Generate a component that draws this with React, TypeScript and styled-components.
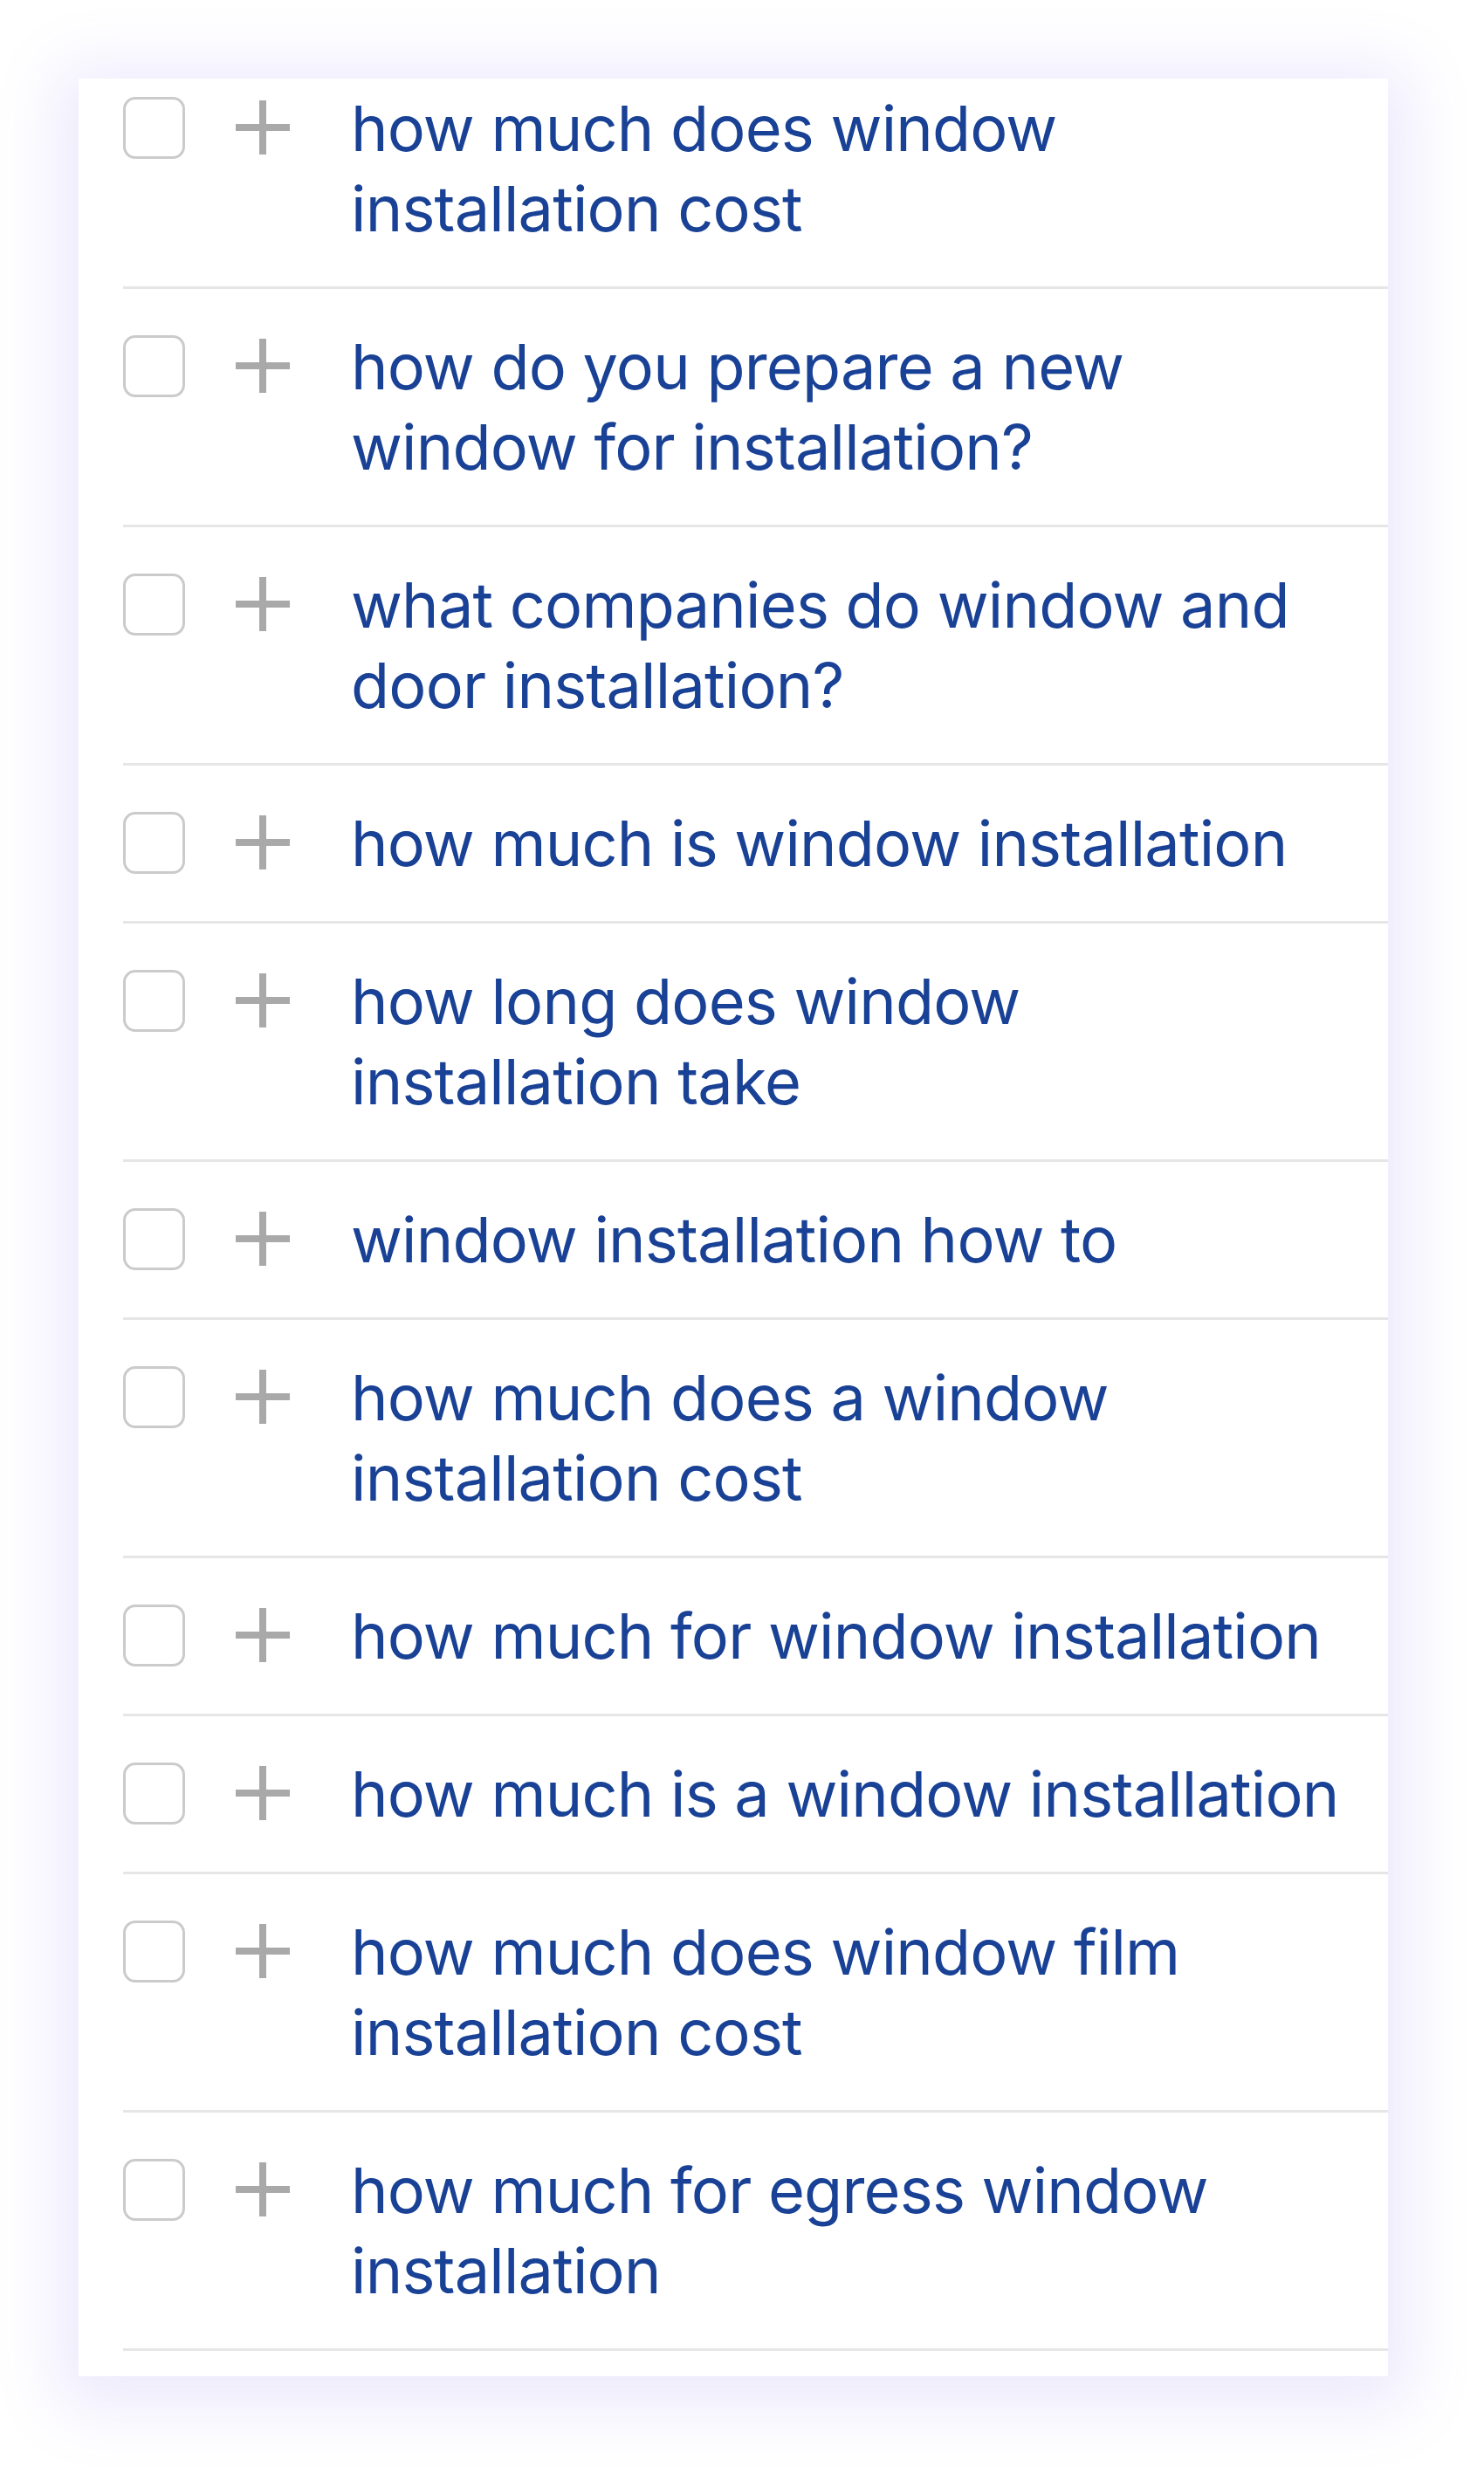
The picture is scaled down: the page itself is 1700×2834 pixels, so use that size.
import React from "react";
import styled, { createGlobalStyle } from "styled-components";

const GlobalStyle = createGlobalStyle`
    html, body {
        margin: 0;
        padding: 0;
        background: #ffffff;
    }
`;

const Page = styled.div`
    width: 1700px;
    height: 2834px;
    padding: 90px 110px 112px 90px;
    box-sizing: border-box;
`;

const Card = styled.div`
    width: 1500px;
    height: 2632px;
    background: #ffffff;
    overflow: hidden;
    padding-left: 51px;
    box-sizing: border-box;
    box-shadow: 0 12px 70px 24px rgba(126, 96, 236, 0.14);
`;

// list is scrolled a little, first row is cut at the top
const List = styled.ul`
    list-style: none;
    margin: -32px 0 0 0;
    padding: 0;
`;

const Row = styled.li`
    display: flex;
    align-items: flex-start;
    padding: 43px 0;
    border-bottom: 3px solid #e6e6e6;
`;

const Checkbox = styled.span`
    flex: none;
    width: 71px;
    height: 71px;
    margin-top: 10px;
    box-sizing: border-box;
    border: 3px solid #cbcbcb;
    border-radius: 14px;
`;

const AddButton = styled.span`
    flex: none;
    display: flex;
    width: 62px;
    height: 62px;
    margin: 14px 70px 0 58px;
    color: #a9a9a9;
`;

const Keyword = styled.span`
    flex: 1;
    padding-right: 52px;
    font-family: Inter, "Noto Sans", sans-serif;
    font-size: 72px;
    letter-spacing: -0.8px;
    line-height: 92px;
    color: #194195;
`;

const PlusIcon = () => (
    <svg width="62" height="62" viewBox="0 0 62 62">
        <path d="M31 0v62M0 31h62" stroke="currentColor" strokeWidth="8" />
    </svg>
);

const keywords = [
    "how much does window installation cost",
    "how do you prepare a new window for installation?",
    "what companies do window and door installation?",
    "how much is window installation",
    "how long does window installation take",
    "window installation how to",
    "how much does a window installation cost",
    "how much for window installation",
    "how much is a window installation",
    "how much does window film installation cost",
    "how much for egress window installation",
];

export default function App() {
    return (
        <>
            <GlobalStyle />
            <Page>
                <Card>
                    <List>
                        {keywords.map(k => (
                            <Row key={k}>
                                <Checkbox />
                                <AddButton>
                                    <PlusIcon />
                                </AddButton>
                                <Keyword>{k}</Keyword>
                            </Row>
                        ))}
                    </List>
                </Card>
            </Page>
        </>
    );
}
